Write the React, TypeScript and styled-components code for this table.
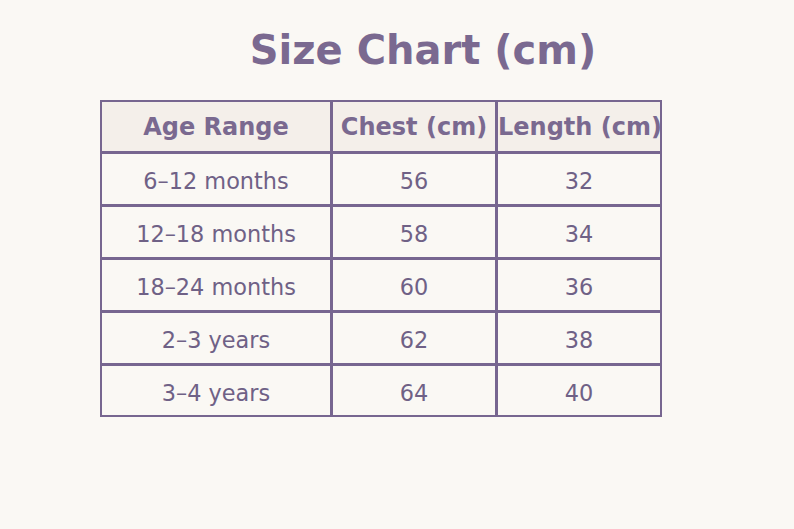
import React from "react";
import styled, { createGlobalStyle } from "styled-components";

const Global = createGlobalStyle`
  html, body { margin: 0; padding: 0; background: #faf8f4; }
  body { font-family: "DejaVu Sans", Verdana, sans-serif; }
`;

const Page = styled.div`
  width: 794px;
  height: 529px;
  background: #faf8f4;
  padding-top: 30px;
  box-sizing: border-box;
`;

const Title = styled.h1`
  margin: 0;
  padding-left: 52px;
  text-align: center;
  font-size: 40px;
  line-height: 40px;
  font-weight: 700;
  color: #7a6990;
`;

const TableWrap = styled.div`
  padding: 30px 0 0 100px;
`;

const Table = styled.table`
  border-collapse: separate;
  border-spacing: 0;
  table-layout: fixed;
  width: 562px;
  border-style: solid;
  border-color: #776690;
  border-width: 1px 0 0 1px;
`;

const Th = styled.th<{ $w: number }>`
  width: ${(p) => p.$w}px;
  box-sizing: border-box;
  border-style: solid;
  border-color: #776690;
  border-width: 1px 2px 2px 1px;
  background: #f4efea;
  color: #7a6990;
  font-size: 24px;
  font-weight: 700;
  height: 52px;
  padding: 0;
  white-space: nowrap;
  overflow: visible;
  text-align: center;
  vertical-align: middle;
`;

const Td = styled.td<{ $last?: boolean }>`
  box-sizing: border-box;
  border-style: solid;
  border-color: #776690;
  border-width: 1px 2px 2px 1px;
  color: #6f6186;
  font-size: 22.4px;
  font-weight: 400;
  height: ${(p) => (p.$last ? 52 : 53)}px;
  padding: 4px 0 0 0;
  text-align: center;
  vertical-align: middle;
  white-space: nowrap;
`;

const rows = [
  ["6–12 months", "56", "32"],
  ["12–18 months", "58", "34"],
  ["18–24 months", "60", "36"],
  ["2–3 years", "62", "38"],
  ["3–4 years", "64", "40"],
];

export default function App() {
  return (
    <Page>
      <Global />
      <Title>Size Chart (cm)</Title>
      <TableWrap>
        <Table>
          <thead>
            <tr>
              <Th $w={231}>Age Range</Th>
              <Th $w={165}>Chest (cm)</Th>
              <Th $w={165}>Length (cm)</Th>
            </tr>
          </thead>
          <tbody>
            {rows.map((r, ri) => (
              <tr key={r[0]}>
                {r.map((c, i) => (
                  <Td key={i} $last={ri === rows.length - 1}>
                    {c}
                  </Td>
                ))}
              </tr>
            ))}
          </tbody>
        </Table>
      </TableWrap>
    </Page>
  );
}
